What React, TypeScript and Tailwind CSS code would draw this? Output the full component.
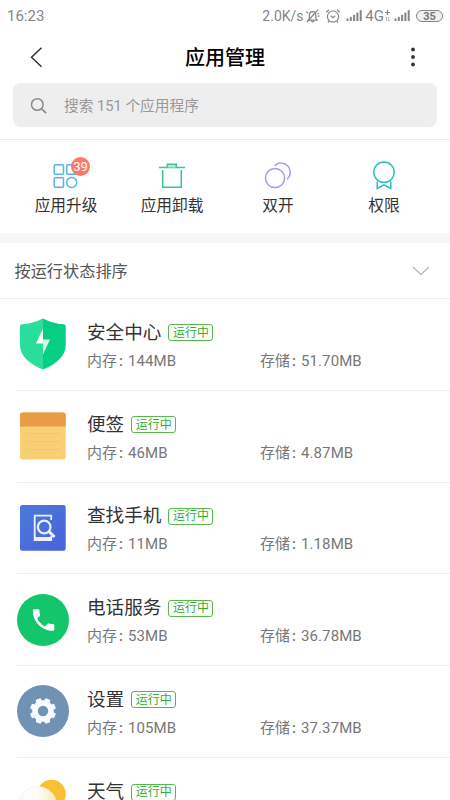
import React from 'react';
import clsx from 'clsx';

interface AppInfo {
  name: string;
  memory?: string;
  storage?: string;
  icon: React.ReactNode;
}

const SignalIcon = () => (
  <svg className="h-[13px] w-[17px] shrink-0" viewBox="0 0 17 13" fill="#858585">
    <rect x="0.5" y="9.5" width="2" height="2.5" />
    <rect x="3.8" y="7.8" width="2" height="4.2" />
    <rect x="7.1" y="5.8" width="2" height="6.2" />
    <rect x="10.4" y="3.6" width="2" height="8.4" />
    <rect x="13.7" y="1.2" width="2" height="10.8" />
  </svg>
);

const MutedBellIcon = () => (
  <svg className="h-4 w-4 shrink-0" viewBox="0 0 16 16" fill="none" stroke="#858585" strokeWidth="1.2">
    <path d="M3 12.2h9.2l-1.4-1.8V7.2c0-2.2-1.2-3.6-3.2-3.6S4.4 5 4.4 7.2v3.2z" />
    <path d="M6.3 12.4c.2 1 .7 1.5 1.4 1.5s1.2-.5 1.4-1.5" />
    <path d="M13 1.6 2 14M1.2 3.6l2 1.6M12.4 6l1.6-.8M12.6 8.2h1.9" />
  </svg>
);

const AlarmIcon = () => (
  <svg className="h-4 w-4 shrink-0" viewBox="0 0 16 16" fill="none" stroke="#858585" strokeWidth="1.2">
    <circle cx="8" cy="8.6" r="5.6" />
    <path d="m5.7 7.7 2.3 2 2.3-2M1.2 4.3l2.8-2.5M14.8 4.3l-2.8-2.5M4 13.4l-1 1.1M12 13.4l1 1.1" />
  </svg>
);

const StatusBar = () => (
  <div className="flex h-[30px] shrink-0 items-center pt-px pl-[7px] text-[#858585]">
    <span className="text-[15px] leading-5">16:23</span>
    <div className="ml-auto flex items-center pr-[7px]">
      <span className="w-[43px] text-[14px] leading-5">2.0K/s</span>
      <MutedBellIcon />
      <div className="w-[4px]" />
      <AlarmIcon />
      <div className="w-[5px]" />
      <SignalIcon />
      <span className="ml-[2px] text-[15px] leading-5">4G</span>
      <svg className="h-[14px] w-[8px] shrink-0" viewBox="0 0 8 14" fill="none" stroke="#858585">
        <path d="M3.5 1v5M1 3.5h5" strokeWidth="1.2" />
        <path d="M2.5 12V8l-1 1.2M4.7 8v4l1-1.2" strokeWidth="0.6" />
      </svg>
      <div className="w-[2px]" />
      <SignalIcon />
      <div className="ml-[5px] flex h-[12px] w-[27px] items-center justify-center rounded-full border border-[#858585] bg-[#f0f0f0] pt-px text-[11px] leading-none font-bold text-[#777]">
        35
      </div>
    </div>
  </div>
);

const actions = [
  {
    label: '应用升级',
    badge: '39',
    icon: (
      <svg className="h-8 w-8" viewBox="0 0 32 32" fill="none" stroke="#55b4f0" strokeWidth="1.5">
        <rect x="4.2" y="4.7" width="9.3" height="9.6" rx="1" />
        <rect x="16.8" y="4.7" width="9.3" height="9.6" rx="1" />
        <rect x="4.2" y="17.8" width="9.3" height="9.4" rx="1" />
        <circle cx="21.7" cy="22.4" r="5" />
      </svg>
    ),
  },
  {
    label: '应用卸载',
    icon: (
      <svg className="h-8 w-8" viewBox="0 0 32 32" fill="none" stroke="#3dc48c" strokeWidth="1.5">
        <path d="M3 7.5h26M6.7 10v17.3h18.6V10" />
        <path d="M11.3 7.5V4.3h9v3.2" fill="#b9ead5" />
      </svg>
    ),
  },
  {
    label: '双开',
    icon: (
      <svg className="h-8 w-8" viewBox="0 0 32 32" fill="none" stroke="#a59bf0" strokeWidth="1.5">
        <circle cx="13" cy="18" r="9.6" />
        <path d="M12.7 5.6C14.4 3.9 16.5 3 19 3c5.3 0 9.3 4.3 9.3 9.3 0 2.7-1.2 5.1-3.2 6.9" />
      </svg>
    ),
  },
  {
    label: '权限',
    icon: (
      <svg className="h-8 w-8" viewBox="0 0 32 32" fill="none" stroke="#2abfbf" strokeWidth="1.5">
        <circle cx="16" cy="12.2" r="10.2" />
        <path d="M9.2 21.5v7l6.8-3.7 6.8 3.7v-7" />
      </svg>
    ),
  },
];

const apps: AppInfo[] = [
  {
    name: '安全中心',
    memory: '144MB',
    storage: '51.70MB',
    icon: (
      <svg className="size-[52px]" viewBox="0 0 52 52">
        <path d="M26 .5C19.5 4 12.5 5.8 5 6.300c-1.200.1-2 .9-2 2V27c0 11.500 10.500 19.500 23 24.500z" fill="#2bdd9a" />
        <path d="M26 .5c6.500 3.500 13.500 5.300 20.700 5.800 1.200.1 2 .9 2 2V27c0 11.500-10.200 19.500-22.700 24.500z" fill="#04cf83" />
        <path d="M26 10.5 19 25.500h7z" fill="#fff" />
        <path d="M26 21.500h7L26 36.500z" fill="#d5f7ea" />
      </svg>
    ),
  },
  {
    name: '便签',
    memory: '46MB',
    storage: '4.87MB',
    icon: (
      <svg className="size-[52px]" viewBox="0 0 52 52">
        <rect x="3" y="2.5" width="45.7" height="47" rx="2.5" fill="#f8cf75" />
        <path d="M3 16.5V5a2.500 2.500 0 0 1 2.500-2.500h40.700A2.500 2.500 0 0 1 48.700 5v11.500z" fill="#e99a45" />
        <path d="M9 23.500h33.500M9 31.500h33.500M9 39.500h33.500" stroke="#f1c76c" />
      </svg>
    ),
  },
  {
    name: '查找手机',
    memory: '11MB',
    storage: '1.18MB',
    icon: (
      <svg className="size-[52px]" viewBox="0 0 52 52" fill="none">
        <defs>
          <linearGradient id="findPhone" x1="0" y1="0" x2="1" y2="1">
            <stop stopColor="#4a7bdc" />
            <stop offset="1" stopColor="#4c60da" />
          </linearGradient>
        </defs>
        <rect x="3" y="3" width="45.7" height="45.7" rx="2.5" fill="url(#findPhone)" />
        <path d="M34.2 18v-4.300H17.700v24.500h16.500V34" stroke="#eef1fc" strokeWidth="1.800" />
        <path d="M17 35h18v4H17z" fill="#eef1fc" />
        <circle cx="27.2" cy="25" r="6.3" fill="#4b6fdb" stroke="#eef1fc" strokeWidth="2.2" />
        <path d="m31.500 29 6 6" stroke="#eef1fc" strokeWidth="3" />
      </svg>
    ),
  },
  {
    name: '电话服务',
    memory: '53MB',
    storage: '36.78MB',
    icon: (
      <svg className="size-[52px]" viewBox="0 0 52 52">
        <circle cx="26" cy="26" r="26" fill="#13c56b" />
        <g transform="translate(12.2 11.6) scale(1.2)">
          <path
            d="M6.62 10.79c1.44 2.83 3.76 5.14 6.59 6.59l2.2-2.2c.27-.27.67-.36 1.02-.24 1.12.37 2.33.57 3.57.57.55 0 1 .45 1 1V20c0 .55-.45 1-1 1-9.39 0-17-7.61-17-17 0-.55.45-1 1-1h3.500c.55 0 1 .45 1 1 0 1.250.2 2.450.57 3.570.11.35.03.74-.25 1.020z"
            fill="#fff"
          />
        </g>
      </svg>
    ),
  },
  {
    name: '设置',
    memory: '105MB',
    storage: '37.37MB',
    icon: (
      <svg className="size-[52px]" viewBox="0 0 52 52">
        <circle cx="26" cy="26" r="26" fill="#7092b4" />
        <g fill="#f7fbff">
          {[22.5, 67.5, 112.5, 157.5, 202.5, 247.5, 292.5, 337.5].map((angle) => (
            <rect key={angle} x="23.2" y="13" width="5.6" height="7" rx="1.2" transform={`rotate(${angle} 26 26)`} />
          ))}
        </g>
        <circle cx="26" cy="26" r="8" fill="none" stroke="#f7fbff" strokeWidth="5.6" />
      </svg>
    ),
  },
  {
    name: '天气',
    icon: (
      <svg className="size-[52px]" viewBox="0 0 52 52">
        <defs>
          <linearGradient id="cloud" x1="0" y1="0" x2="1" y2="0">
            <stop stopColor="#fafafa" />
            <stop offset="0.5" stopColor="#fffdf7" />
            <stop offset="1" stopColor="#fee9b6" />
          </linearGradient>
        </defs>
        <circle cx="34.5" cy="16" r="14.3" fill="#fac032" />
        <circle cx="20.5" cy="28" r="19.5" fill="url(#cloud)" stroke="#ececec" strokeWidth="0.6" />
      </svg>
    ),
  },
];

const AppStat = ({ label, value }: { label: string; value: string }) => (
  <span className="flex text-[15px] leading-5 text-[#777]">
    <span className="w-[32px]">{label}</span>
    <span className="w-[9px] font-medium">:</span>
    <span className="tracking-[0.1px]">{value}</span>
  </span>
);

const AppRow = ({ app, last }: { app: AppInfo; last: boolean }) => (
  <div className={clsx('ml-[17px] flex h-[91.75px] shrink-0 items-center border-[#ededed]', !last && 'border-b')}>
    {app.icon}
    <div className="ml-[18px] h-[53px] flex-1">
      <div className="flex h-[29px] items-center">
        <span className="mt-px text-[18.6px] leading-7 text-[#333]">{app.name}</span>
        <span className="mt-px ml-[7px] flex h-[17px] w-[45px] items-center justify-center rounded-[3px] border border-[#55b950] text-[12px] leading-none text-[#35ad30]">
          运行中
        </span>
      </div>
      {app.memory && app.storage && (
        <div className="mt-[4px] grid grid-cols-[173px_1fr]">
          <AppStat label="内存" value={app.memory} />
          <AppStat label="存储" value={app.storage} />
        </div>
      )}
    </div>
  </div>
);

const App: React.FC = () => {
  return (
    <div className="flex h-[800px] w-[450px] flex-col overflow-hidden bg-white font-[Roboto,'Noto_Sans_CJK_SC',sans-serif]">
      <StatusBar />

      <header className="grid h-[53px] shrink-0 grid-cols-[60px_1fr_60px] items-center">
        <svg className="ml-[28px] h-6 w-4" viewBox="0 0 16 24" fill="none" stroke="#333" strokeWidth="1.5">
          <path d="M13.5 2.8 3.5 12.3l10 9.5" />
        </svg>
        <h1 className="mt-[2px] text-center text-[20px] leading-7 font-medium text-black">应用管理</h1>
        <svg className="ml-[15px] h-6 w-4" viewBox="0 0 16 24" fill="#333">
          <circle cx="8" cy="4.5" r="1.9" />
          <circle cx="8" cy="12" r="1.9" />
          <circle cx="8" cy="19.5" r="1.9" />
        </svg>
      </header>

      <div className="mx-[13px] flex h-[44px] shrink-0 items-center rounded-lg bg-[#eeeeee]">
        <svg className="mt-px ml-[17px] h-[18px] w-[18px]" viewBox="0 0 18 18" fill="none" stroke="#8c8c8c" strokeWidth="1.5">
          <circle cx="7.3" cy="7.5" r="5.8" />
          <path d="m11.5 11.7 4.5 4.5" strokeWidth="1.8" />
        </svg>
        <span className="mt-px ml-[16px] text-[14.7px] leading-5 text-[#999]">搜索 151 个应用程序</span>
      </div>

      <div className="mt-[12px] grid h-[94px] shrink-0 grid-cols-4 border-t border-[#ececec] px-[13px] pt-[20px]">
        {actions.map((action) => (
          <button key={action.label} type="button" className="flex flex-col items-center">
            <span className="relative">
              {action.icon}
              {action.badge && (
                <span className="absolute -top-[3px] left-[21px] flex size-[19px] items-center justify-center rounded-full bg-[#fd7967] text-[13px] leading-none text-white">
                  {action.badge}
                </span>
              )}
            </span>
            <span className="mt-[4px] text-[15.7px] leading-5 text-[#333]">{action.label}</span>
          </button>
        ))}
      </div>

      <div className="h-[10px] shrink-0 bg-[#f6f6f6]" />

      <div className="flex h-[56px] shrink-0 items-center justify-between border-b border-[#ececec] pr-[20px] pl-[14.5px]">
        <span className="mt-[2px] text-[16.2px] leading-6 text-[#555]">按运行状态排序</span>
        <svg className="h-3 w-[18px]" viewBox="0 0 18 12" fill="none" stroke="#b8b8b8" strokeWidth="1.3">
          <path d="m1 2 8 7.5L17 2" />
        </svg>
      </div>

      {apps.map((app, index) => (
        <AppRow key={app.name} app={app} last={index === apps.length - 1} />
      ))}
    </div>
  );
};

export default App;
